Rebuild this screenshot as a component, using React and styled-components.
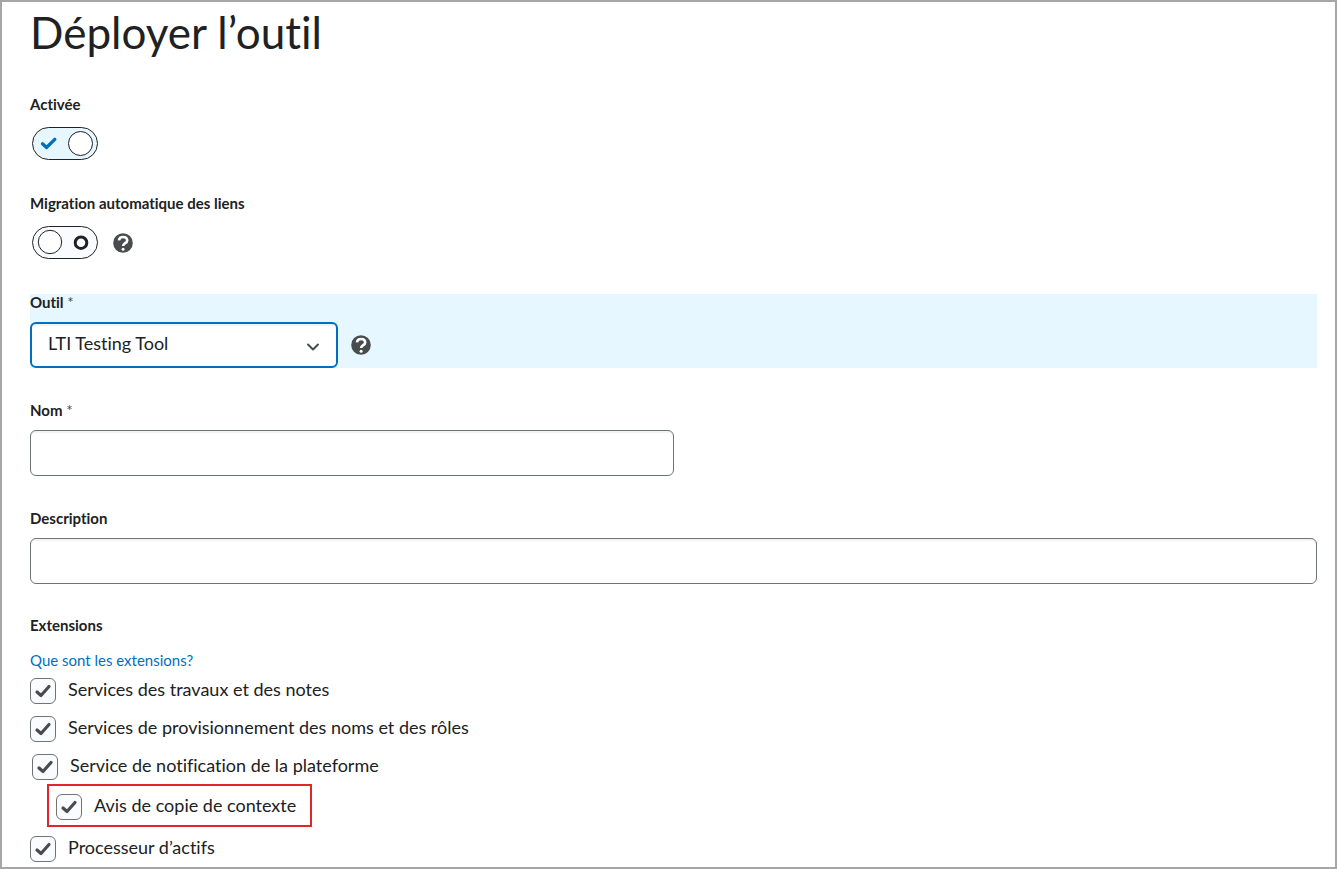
import React from "react";
import styled, { createGlobalStyle } from "styled-components";

const ink = "#202122";
const steel = "#494c4e";
const border = "#6e7376";
const blue = "#006fbf";
const paleBlue = "#e6f7ff";
const offWhite = "#f9fbff";

const GlobalStyle = createGlobalStyle`
  *, *::before, *::after { box-sizing: border-box; }
  body {
    margin: 0;
    background: #fff;
    color: ${ink};
    font-family: Lato, "Open Sans", sans-serif;
    font-size: 18px;
    font-variant-ligatures: none;
    line-height: 22px;
  }
`;

const Page = styled.main`
  min-height: 100vh;
  border: 2px solid #a6a6a6;
  padding: 0 18px 4px 28px;
`;

const Title = styled.h1`
  margin: 0 0 33px;
  font-size: 44px;
  font-weight: 400;
  line-height: 61px;
`;

const Form = styled.form`
  display: flex;
  flex-direction: column;
  gap: 34px;
`;

const Field = styled.div`
  background: ${(p) => (p.$active ? paleBlue : "transparent")};
`;

const Group = styled.fieldset`
  margin: 0;
  padding: 0;
  border: 0;
  min-width: 0;
`;

const Label = styled.label`
  display: block;
  margin-bottom: 12px;
  font-size: 15px;
  font-weight: 700;
  line-height: 16px;
`;

const Required = styled.span`
  font-weight: 400;
  color: ${steel};
`;

const Controls = styled.div`
  display: flex;
  align-items: center;
  gap: 13px;
`;

const SwitchControls = styled(Controls)`
  gap: 15px;
  padding: 3px 2px 1px;
`;

const Stack = styled.span`
  display: grid;
  flex: none;
  align-items: center;

  & > * {
    grid-area: 1 / 1;
  }

  & > svg {
    pointer-events: none;
  }
`;

const SwitchInput = styled.input`
  appearance: none;
  margin: 0;
  width: 66px;
  height: 33px;
  border: 1px solid ${ink};
  border-radius: 17px;
  background: ${offWhite};

  &:checked {
    background: ${paleBlue};
  }
`;

const HelpButton = styled.button`
  display: flex;
  padding: 0;
  border: 0;
  background: none;
  color: ${steel};
`;

const Select = styled.select`
  appearance: none;
  width: 308px;
  height: 46px;
  margin: 0;
  padding: 0 40px 4px 16px;
  border: 2px solid ${blue};
  border-radius: 6px;
  background: #fff;
  box-shadow: inset 0 2px 0 #f1f2f4;
  color: ${ink};
  font: inherit;
  outline: none;
`;

const Chevron = styled.svg`
  justify-self: end;
  margin: 4px 18px 0 0;
`;

const TextInput = styled.input`
  display: block;
  width: ${(p) => (p.$half ? "50%" : "100%")};
  height: 46px;
  padding: 0 16px;
  border: 1px solid ${border};
  border-radius: 6px;
  background: #fff;
  box-shadow: inset 0 2px 0 #f1f4f6;
  color: ${ink};
  font: inherit;
`;

const Legend = styled.legend`
  padding: 0;
  margin-bottom: 19px;
  font-size: 15px;
  font-weight: 700;
  line-height: 14px;
`;

const HelpLink = styled.a`
  display: block;
  margin-bottom: 9px;
  color: ${blue};
  font-size: 15px;
  line-height: 18px;
  text-decoration: none;
`;

const Options = styled.div`
  display: flex;
  flex-direction: column;
  align-items: flex-start;
  gap: 12px;
`;

const Nested = styled.div`
  display: flex;
  flex-direction: column;
  align-items: flex-start;
  gap: 4px;
  padding-left: 2px;
`;

const Callout = styled.div`
  margin: 0 0 -3px 15px;
  padding: 8px 14px 5px 7px;
  border: 2px solid #e3242b;
`;

const OptionLabel = styled.label`
  display: flex;
  gap: 12px;
  height: 26px;
`;

const CheckInput = styled.input`
  appearance: none;
  margin: 0;
  width: 26px;
  height: 26px;
  border: 1px solid ${border};
  border-radius: 6px;
  background: ${offWhite};
`;

function Switch({ id, on }) {
  return (
    <Stack>
      <SwitchInput id={id} type="checkbox" role="switch" defaultChecked={on} />
      <svg width="66" height="33" viewBox="0 0 66 33" fill="none" aria-hidden="true">
        {on ? (
          <>
            <path d="M10.500 16.800 14.500 20.500 22.800 12.300" stroke={blue} strokeWidth="3.300" strokeLinecap="round" strokeLinejoin="round" />
            <circle cx="48.500" cy="16.500" r="12" fill="#fff" stroke={ink} />
          </>
        ) : (
          <>
            <circle cx="18" cy="16" r="11.700" fill="#fff" stroke={ink} />
            <circle cx="49" cy="16.700" r="5.800" stroke={ink} strokeWidth="3" />
          </>
        )}
      </svg>
    </Stack>
  );
}

function Help({ label }) {
  return (
    <HelpButton type="button" aria-label={label}>
      <svg width="20" height="20" viewBox="0 0 20 20" fill="none" aria-hidden="true">
        <circle cx="10" cy="10" r="9.800" fill="currentColor" />
        <path d="M5.900 7.400C6.300 5 8 4 10 4c2.400 0 4.200 1.300 4.200 3.400 0 2.900-4.100 2.700-4.100 5.700" stroke="#fff" strokeWidth="2.600" />
        <circle cx="10.100" cy="16.300" r="1.500" fill="#fff" />
      </svg>
    </HelpButton>
  );
}

function Option({ children }) {
  return (
    <OptionLabel>
      <Stack>
        <CheckInput type="checkbox" defaultChecked />
        <svg width="26" height="26" viewBox="0 0 26 26" fill="none" aria-hidden="true">
          <path d="M7 14 11 17.500 19 8.500" stroke={steel} strokeWidth="3.200" strokeLinecap="round" strokeLinejoin="round" />
        </svg>
      </Stack>
      <span>{children}</span>
    </OptionLabel>
  );
}

export default function App() {
  return (
    <>
      <GlobalStyle />
      <Page>
        <Title>Déployer l’outil</Title>
        <Form>
          <Field>
            <Label htmlFor="enabled">Activée</Label>
            <SwitchControls>
              <Switch id="enabled" on />
            </SwitchControls>
          </Field>
          <Field>
            <Label htmlFor="migration">Migration automatique des liens</Label>
            <SwitchControls>
              <Switch id="migration" />
              <Help label="Aide sur la migration automatique des liens" />
            </SwitchControls>
          </Field>
          <Field $active>
            <Label htmlFor="tool">
              Outil <Required>*</Required>
            </Label>
            <Controls>
              <Stack>
                <Select id="tool" required>
                  <option>LTI Testing Tool</option>
                </Select>
                <Chevron width="14" height="8" viewBox="0 0 14 8" fill="none" aria-hidden="true">
                  <path d="M2 1.500 7 6.500 12 1.500" stroke={steel} strokeWidth="2" strokeLinecap="round" strokeLinejoin="round" />
                </Chevron>
              </Stack>
              <Help label="Aide sur l’outil" />
            </Controls>
          </Field>
          <Field>
            <Label htmlFor="name">
              Nom <Required>*</Required>
            </Label>
            <TextInput id="name" type="text" required $half />
          </Field>
          <Field>
            <Label htmlFor="description">Description</Label>
            <TextInput id="description" type="text" />
          </Field>
          <Group>
            <Legend>Extensions</Legend>
            <HelpLink href="#extensions">Que sont les extensions?</HelpLink>
            <Options>
              <Option>Services des travaux et des notes</Option>
              <Option>Services de provisionnement des noms et des rôles</Option>
              <Nested>
                <Option>Service de notification de la plateforme</Option>
                <Callout>
                  <Option>Avis de copie de contexte</Option>
                </Callout>
              </Nested>
              <Option>Processeur d’actifs</Option>
            </Options>
          </Group>
        </Form>
      </Page>
    </>
  );
}
